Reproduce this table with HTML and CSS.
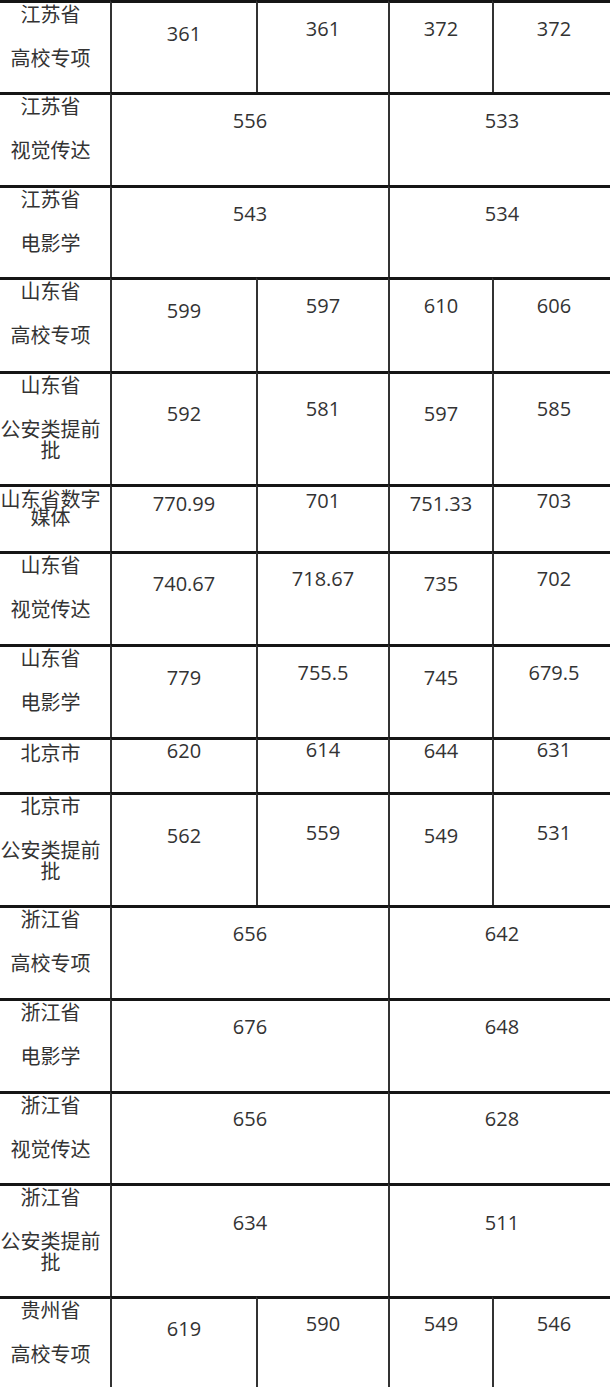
FILE: index.html
```html
<!DOCTYPE html>
<html lang="zh-CN">
<head>
<meta charset="utf-8">
<title>分数线</title>
<link rel="stylesheet" href="styles.css">
</head>
<body>
<div class="tbl">
  <div class="row r92 o23">
    <div class="hd"><p>江苏省</p><p class="cat">高校专项</p></div>
    <div class="c lo">361</div><div class="c">361</div><div class="c">372</div><div class="c">372</div>
  </div>
  <div class="row r93 o23">
    <div class="hd"><p>江苏省</p><p class="cat">视觉传达</p></div>
    <div class="c span">556</div><div class="c span">533</div>
  </div>
  <div class="row r92 o23">
    <div class="hd"><p>江苏省</p><p class="cat">电影学</p></div>
    <div class="c span">543</div><div class="c span">534</div>
  </div>
  <div class="row r94 o23">
    <div class="hd"><p>山东省</p><p class="cat">高校专项</p></div>
    <div class="c lo">599</div><div class="c">597</div><div class="c">610</div><div class="c">606</div>
  </div>
  <div class="row r113 o32">
    <div class="hd"><p>山东省</p><p class="cat">公安类提前批</p></div>
    <div class="c lo">592</div><div class="c">581</div><div class="c lo">597</div><div class="c">585</div>
  </div>
  <div class="row r67 o11">
    <div class="hd tight"><p>山东省数字媒体</p></div>
    <div class="c lo3">770.99</div><div class="c">701</div><div class="c lo3">751.33</div><div class="c">703</div>
  </div>
  <div class="row r93 o22">
    <div class="hd"><p>山东省</p><p class="cat">视觉传达</p></div>
    <div class="c lo">740.67</div><div class="c">718.67</div><div class="c lo">735</div><div class="c">702</div>
  </div>
  <div class="row r93 o23">
    <div class="hd"><p>山东省</p><p class="cat">电影学</p></div>
    <div class="c lo">779</div><div class="c">755.5</div><div class="c lo">745</div><div class="c">679.5</div>
  </div>
  <div class="row r55 o5">
    <div class="hd single"><p>北京市</p></div>
    <div class="c lo3">620</div><div class="c">614</div><div class="c lo3">644</div><div class="c">631</div>
  </div>
  <div class="row r113 o35">
    <div class="hd"><p>北京市</p><p class="cat">公安类提前批</p></div>
    <div class="c lo3">562</div><div class="c">559</div><div class="c lo3">549</div><div class="c">531</div>
  </div>
  <div class="row r93 o23">
    <div class="hd"><p>浙江省</p><p class="cat">高校专项</p></div>
    <div class="c span">656</div><div class="c span">642</div>
  </div>
  <div class="row r93 o23">
    <div class="hd"><p>浙江省</p><p class="cat">电影学</p></div>
    <div class="c span">676</div><div class="c span">648</div>
  </div>
  <div class="row r92 o22">
    <div class="hd"><p>浙江省</p><p class="cat">视觉传达</p></div>
    <div class="c span">656</div><div class="c span">628</div>
  </div>
  <div class="row r113 o34">
    <div class="hd"><p>浙江省</p><p class="cat">公安类提前批</p></div>
    <div class="c span">634</div><div class="c span">511</div>
  </div>
  <div class="row r100 o22">
    <div class="hd"><p>贵州省</p><p class="cat">高校专项</p></div>
    <div class="c lo">619</div><div class="c">590</div><div class="c">549</div><div class="c">546</div>
  </div>
</div>
</body>
</html>
```

FILE: styles.css
```css
html, body {
  margin: 0;
  padding: 0;
  background: #fff;
  overflow: hidden;
}

.tbl {
  display: grid;
  grid-template-columns: 110px 146px 132px 104px 122px;
  width: 614px;
  font-family: "Open Sans", "Noto Sans CJK SC", sans-serif;
  font-size: 20px;
  line-height: 20px;
  color: #333;
}

.row { display: contents; }

.hd, .c {
  box-sizing: border-box;
  border-top: 3px solid #151515;
  text-align: center;
}

.c {
  border-left: 2px solid #333;
  padding-top: calc(var(--o) - 7px);
}

.c.span { grid-column: span 2; }
.c.lo { padding-top: calc(var(--o) - 2px); }
.c.lo3 { padding-top: calc(var(--o) - 4px); }

.hd {
  height: var(--h);
  padding: 1px 9px 0 0;
}

.hd p {
  margin: 0;
  line-height: 21px;
}

.hd .cat { margin-top: 23px; }

.hd.tight { padding-top: 4px; }
.hd.tight p { line-height: 18px; }
.hd.single { padding-top: 3px; }

.r55 { --h: 55px; }
.r67 { --h: 67px; }
.r92 { --h: 92px; }
.r93 { --h: 93px; }
.r94 { --h: 94px; }
.r100 { --h: 100px; }
.r113 { --h: 113px; }

.o5 { --o: 5px; }
.o11 { --o: 11px; }
.o22 { --o: 22px; }
.o23 { --o: 23px; }
.o32 { --o: 32px; }
.o34 { --o: 34px; }
.o35 { --o: 35px; }
```
